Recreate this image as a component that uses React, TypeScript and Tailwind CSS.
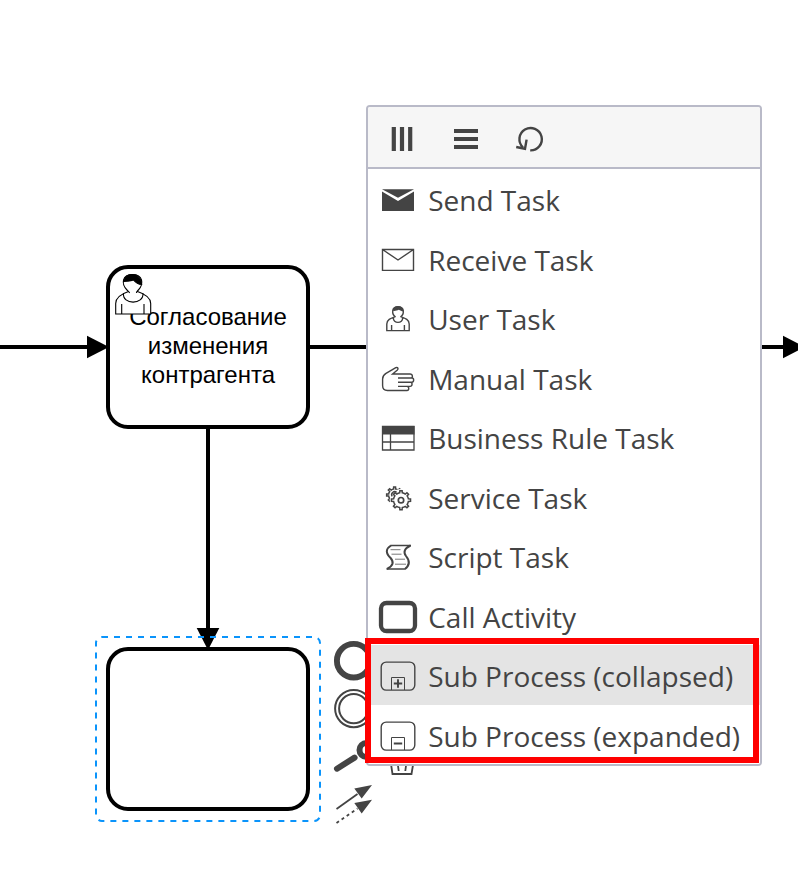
import type { ReactNode } from 'react';

const INK = '#444444';

function gearPath(cx: number, cy: number, outer: number, inner: number, teeth: number) {
  const step = (Math.PI * 2) / teeth;
  const at = (r: number, a: number) => `${(cx + r * Math.cos(a)).toFixed(2)} ${(cy + r * Math.sin(a)).toFixed(2)}`;
  let d = '';
  for (let i = 0; i < teeth; i++) {
    const a = i * step - Math.PI / 2;
    d += `${i ? 'L' : 'M'}${at(inner, a - step * 0.22)}L${at(outer, a - step * 0.15)}L${at(outer, a + step * 0.15)}L${at(inner, a + step * 0.22)}`;
    d += `A${inner} ${inner} 0 0 1 ${at(inner, a + step * 0.78)}`;
  }
  return d + 'Z';
}

function EntryIcon({ children }: { children: ReactNode }) {
  return (
    <svg className="h-10 w-10 shrink-0" viewBox="0 0 40 40" fill="none" stroke={INK} strokeWidth={1.4}>
      {children}
    </svg>
  );
}

const entries: { label: string; icon: ReactNode; active?: boolean }[] = [
  {
    label: 'Send Task',
    icon: (
      <>
        <path d="M4 10.2H36L20 18.8Z" fill={INK} stroke="none" />
        <path d="M4 12.6L20 22L36 12.6V32H4Z" fill={INK} stroke="none" />
      </>
    ),
  },
  {
    label: 'Receive Task',
    icon: <path d="M4.5 11.5H35.5V32.4H4.5ZM4.5 11.5L20 22L35.5 11.5" />,
  },
  {
    label: 'User Task',
    icon: (
      <>
        <path d="M17 18.8C12.6 20.4 9 21.6 8.8 26V32.6H31.2V26C31 21.6 27.4 20.4 23 18.8M15.4 19.6C14.8 26 25.2 26 24.6 19.6M13.6 27V32.6M26.4 27V32.6" />
        <path d="M17.6 19C13.4 16 13.4 8.7 20 8.7S26.6 16 22.4 19" />
        <path d="M14.4 12.8C15 10 17 8.2 20 8.2S25.4 10 25.8 13.6C23.6 13.8 22.4 12.4 20.8 11.8C18.6 13 16.6 13 14.4 12.8Z" fill={INK} stroke="none" />
      </>
    ),
  },
  {
    label: 'Manual Task',
    icon: (
      <path
        d="M20 21H33C35 21 35 17 32 17H14.6L19.4 13C20.8 11.6 19.6 9.8 17.8 10.7L8 16.4C5.4 18 4.6 19.6 4.6 22V28.5C4.6 31.7 6.6 33.5 9.5 33.5H29C31.3 33.5 31.3 29.4 29 29.4M20 21H34C36.2 21 36.2 25.2 34 25.2H20M32.6 25.2C34.6 25.2 34.6 29.4 32.2 29.4H20"
        strokeWidth={1.4}
      />
    ),
  },
  {
    label: 'Business Rule Task',
    icon: (
      <>
        <path d="M4.5 9.5H36V33H4.5ZM12.5 17V33M4.5 25H36" strokeWidth={1.3} />
        <path d="M4 9H36.5V17.4H4Z" fill={INK} stroke="none" />
      </>
    ),
  },
  {
    label: 'Service Task',
    icon: (
      <>
        <path d={gearPath(16.6, 19, 8, 6, 8)} strokeWidth={1.5} />
        <circle cx="23" cy="24.2" r="11.2" fill="#ffffff" stroke="none" />
        <path d="M14.2 20.4A3 3 0 0 1 18.6 16.4" />
        <path d={gearPath(23, 24.2, 9.6, 7.5, 8)} strokeWidth={1.5} fill="#ffffff" />
        <circle cx="23" cy="24.2" r="2.7" strokeWidth={1.7} />
      </>
    ),
  },
  {
    label: 'Script Task',
    icon: (
      <>
        <path d="M13 9.5C7.500 13 7.500 17 12.600 22C16 26 15.500 29.500 9 33" strokeWidth={2} />
        <path d="M32.500 9.500C26.500 12.500 25 16 28 20C32 25 32 29 27 33" strokeWidth={2} />
        <path d="M12.500 9.500H33M8.500 33H27.500" strokeWidth={1.500} />
        <path d="M12.500 13.700H22.500M13.500 18.200H23.500M17 23.200H27M17 28.200H28" strokeWidth={1} stroke="#777777" />
      </>
    ),
  },
  {
    label: 'Call Activity',
    icon: <rect x="3" y="8" width="34" height="28" rx="5.5" strokeWidth={4.3} />,
  },
  {
    label: 'Sub Process (collapsed)',
    active: true,
    icon: (
      <>
        <rect x="3.2" y="7.1" width="33.6" height="28" rx="5" />
        <path d="M13.5 35V22.5H26.5V35" strokeWidth={1} />
        <path d="M15.8 28.5H24.2M20 24.3V32.7" strokeWidth={1.9} />
      </>
    ),
  },
  {
    label: 'Sub Process (expanded)',
    icon: (
      <>
        <rect x="3.2" y="8.1" width="33.6" height="28" rx="5" />
        <path d="M13.5 36V23.5H26.5V36" strokeWidth={1} />
        <path d="M15.8 29.5H24.2" strokeWidth={1.9} />
      </>
    ),
  },
];

const tools: ReactNode[] = [
  <path key="columns" d="M7.8 4V28M16 4V28M24.2 4V28" strokeWidth={4.2} />,
  <path key="rows" d="M4 8H28M4 16H28M4 24H28" strokeWidth={4} />,
  <path key="loop" d="M16.2 27.4A11.2 11.2 0 1 0 9 24.4M2.2 24L11 25.8L12.6 16.6" strokeWidth={2.4} />,
];

function Diagram() {
  return (
    <svg className="absolute inset-0" width="798" height="883" viewBox="0 0 798 883" fill="none">
      <g stroke="#000000" strokeWidth={4}>
        <path d="M0 347H90M308 347H785M208 427V630" />
        <rect x="108" y="267" width="200" height="160" rx="20" fill="#ffffff" />
        <rect x="108" y="649" width="200" height="160" rx="20" fill="#ffffff" />
      </g>
      <g fill="#000000">
        <path d="M87 335.7L109 347L87 358.3Z" />
        <path d="M783 335.7L805 347L783 358.3Z" />
        <path d="M196.7 628L208 650L219.3 628Z" />
      </g>
      <text textAnchor="middle" fontSize="24" fill="#000000" className="font-['Liberation_Sans',Arial,sans-serif]">
        <tspan x="208" y="325">Согласование</tspan>
        <tspan x="208" y="354">изменения</tspan>
        <tspan x="208" y="383">контрагента</tspan>
      </text>
      <g stroke="#000000" strokeWidth={1.1}>
        <path d="M128.5 291.5C121 294 115.7 297 115.7 303.5V314H150.7V303.5C150.7 297 145 294 137.5 291.5Z" fill="#ffffff" />
        <path d="M123.5 293.3C122 305 144 305 143 293.3M121.7 304V314M144 304V314" />
        <path d="M129.6 293C129 291.5 128.5 291.5 127 290C121 284 122 274.5 132.5 274.5S144 284 138.400 290C137 291.500 136.700 291.500 136.400 293" fill="#ffffff" />
        <path d="M123.7 281.5C124.5 277 128 274.5 132.5 274.5S141 277.5 141.7 284.5C138 284.5 135.5 282.5 133.5 280C130.5 281.500 127 281 123.7 281.5Z" fill="#000000" />
      </g>
      <rect x="96" y="637" width="224" height="184" rx="6" stroke="#0a94fb" strokeWidth={2} strokeDasharray="6 6" />
      <g stroke={INK}>
        <circle cx="353.7" cy="660.7" r="16.8" strokeWidth={5.9} />
        <circle cx="353.7" cy="708.6" r="18.6" strokeWidth={2} />
        <circle cx="353.7" cy="708.6" r="14.6" strokeWidth={2} />
        <path d="M337 768.7L354.6 757.6" strokeWidth={6} strokeLinecap="round" />
        <circle cx="366.5" cy="750" r="7" strokeWidth={6} />
        <path d="M336.5 809L357.5 794" strokeWidth={1.8} />
        <path d="M336.5 823L357.5 808.5" strokeWidth={1.8} strokeDasharray="3 3.2" />
        <path d="M390.7 762L392.5 774H411.5L413.5 762M397.5 762L398.7 771M406.5 762L405.3 771" strokeWidth={1.8} />
      </g>
      <path d="M372 785L354.3 788.5L361.7 798.5ZM372 799.7L354.3 803L361.7 813.5Z" fill={INK} />
    </svg>
  );
}

function ReplaceMenu() {
  return (
    <div className="absolute left-[366px] top-[105px] w-[396px] overflow-hidden rounded-[4px] border-2 border-[#b9bac8] bg-white">
      <div className="flex h-[62px] border-b-2 border-[#b9bac8] bg-[#f6f6f6] px-[2px] pt-4">
        {tools.map((tool, i) => (
          <button key={i} className="flex h-8 w-16 justify-center">
            <svg className="h-8 w-8" viewBox="0 0 32 32" fill="none" stroke={INK}>
              {tool}
            </svg>
          </button>
        ))}
      </div>
      <ul>
        {entries.map(({ label, icon, active }) => (
          <li
            key={label}
            className={`flex h-[59.5px] items-center gap-[10.2px] whitespace-nowrap pl-[10px] text-[28px] leading-[38px] text-[#444444] ${active ? 'bg-[#e4e4e4]' : 'bg-white'}`}
          >
            <EntryIcon>{icon}</EntryIcon>
            <span className="pt-[3.4px]">{label}</span>
          </li>
        ))}
      </ul>
    </div>
  );
}

export default function App() {
  return (
    <main className="relative h-[883px] w-[798px] overflow-hidden bg-white font-['Open_Sans','Noto_Sans',sans-serif]">
      <Diagram />
      <ReplaceMenu />
      <div className="pointer-events-none absolute left-[365px] top-[638px] h-[125px] w-[394px] border-[6px] border-[#ff0000]" />
    </main>
  );
}
